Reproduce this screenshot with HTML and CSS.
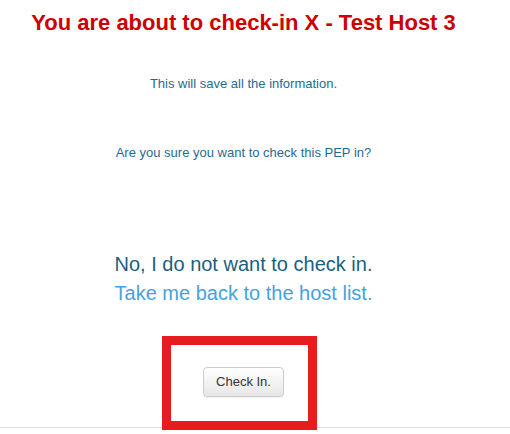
FILE: index.html
```html
<!DOCTYPE html>
<html lang="en">
<head>
<meta charset="utf-8">
<title>Check-in</title>
<link rel="stylesheet" href="styles.css">
</head>
<body>
<main class="page">
  <h1 class="title">You are about to check-in X - Test Host 3</h1>
  <p class="info info-first">This will save all the information.</p>
  <p class="info info-second">Are you sure you want to check this PEP in?</p>
  <div class="back">
    <p class="back-line">No, I do not want to check in.</p>
    <a class="back-link" href="#">Take me back to the host list.</a>
  </div>
  <div class="actions">
    <button class="btn" type="button">Check In.</button>
  </div>
</main>
<hr class="rule">
<div class="highlight"></div>
</body>
</html>
```

FILE: styles.css
```css
html, body {
  margin: 0;
  padding: 0;
  background: #ffffff;
}
body {
  font-family: "Liberation Sans", Arial, sans-serif;
  position: relative;
  height: 434px;
  overflow: hidden;
}
.page {
  width: 487px;
  text-align: center;
  padding-top: 10px;
}
.title {
  margin: 0;
  font-size: 22px;
  line-height: 26px;
  font-weight: bold;
  color: #cc0000;
}
.info {
  margin: 0;
  font-size: 13px;
  line-height: 18px;
  color: #1e6b96;
}
.info-first {
  margin-top: 38.5px;
}
.info-second {
  margin-top: 51px;
}
.back {
  margin-top: 88px;
  display: flex;
  flex-direction: column;
  align-items: center;
}
.back-line {
  margin: 0;
  font-size: 20px;
  line-height: 29px;
  color: #1a5f80;
}
.back-link {
  font-size: 20px;
  line-height: 29px;
  color: #43a3e0;
  text-decoration: none;
}
.actions {
  margin-top: 59.5px;
  display: flex;
  justify-content: center;
}
.btn {
  font-family: "Liberation Sans", Arial, sans-serif;
  font-size: 13px;
  line-height: 16px;
  padding: 6px 12px;
  color: #333333;
  background: linear-gradient(#ffffff, #e6e6e6);
  border: 1px solid #cccccc;
  border-radius: 4px;
  box-shadow: 0 1px 1px rgba(0, 0, 0, 0.06);
}
.rule {
  margin: 30px 0 0;
  border: 0;
  border-top: 1px solid #dddddd;
  height: 0;
}
.highlight {
  position: absolute;
  left: 162px;
  top: 336px;
  width: 155px;
  height: 94px;
  box-sizing: border-box;
  border: 9px solid #e61c20;
}
```
